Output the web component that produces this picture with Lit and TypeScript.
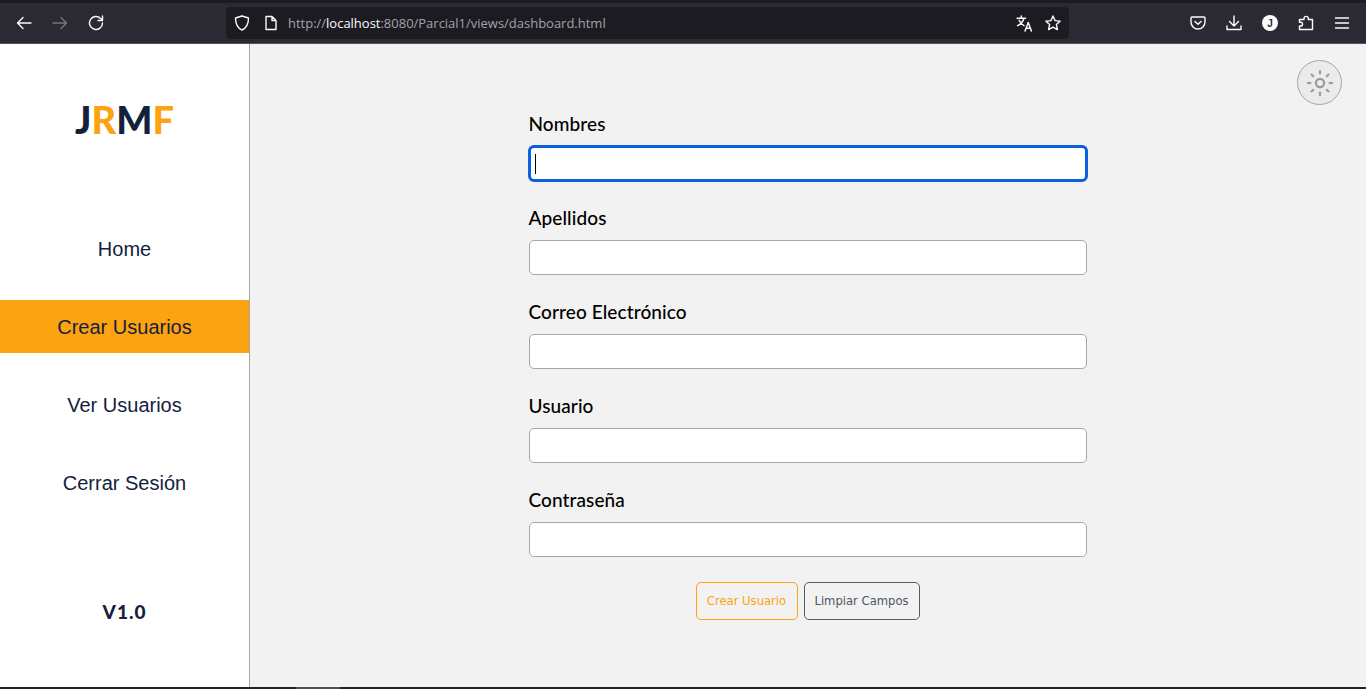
import { LitElement, html, css, svg } from 'lit';
import { customElement } from 'lit/decorators.js';

const icon = (body: unknown, size = 16) => html`<svg class="ic" width=${size} height=${size} viewBox="0 0 16 16" fill="none" stroke="currentColor" stroke-width="1.4" stroke-linecap="round" stroke-linejoin="round">${body}</svg>`;

@customElement('app-root')
export class AppRoot extends LitElement {
  static styles = css`
    :host {
      display: flex;
      flex-direction: column;
      height: 689px;
      overflow: hidden;
      background: #1c1b22;
      font-family: 'Liberation Sans', Arial, sans-serif;
    }

    .strip { height: 3px; background: #1c1b22; }
    .toolbar {
      height: 41px;
      box-sizing: border-box;
      background: #2b2a33;
      border-bottom: 1px solid #55545c;
      display: flex;
      align-items: center;
      color: #fbfbfe;
    }
    .ic { display: block; flex: none; }
    .nav { display: flex; align-items: center; gap: 20px; margin-left: 16px; width: 210px; }
    .dim { color: #77767c; }
    .url {
      width: 843px;
      height: 32px;
      border-radius: 4px;
      background: #1c1b22;
      display: flex;
      align-items: center;
      padding: 0 8px;
      box-sizing: border-box;
      font-family: 'Open Sans', 'Noto Sans', sans-serif;
      font-size: 13px;
      color: #a3a2a8;
    }
    .url .ic { color: #fbfbfe; }
    .url .shield { margin-right: 13px; }
    .url .addr { margin-left: 9px; flex: 1; letter-spacing: -0.01px; }
    .url b { font-weight: 400; color: #fbfbfe; }
    .url .tr { margin-right: 12px; margin-left: -1px; }
    .tools { display: flex; align-items: center; gap: 20px; margin-left: 121px; }
    .avatar {
      width: 16px;
      height: 16px;
      border-radius: 50%;
      background: #fbfbfe;
      color: #2b2a33;
      font-size: 10px;
      font-weight: 700;
      display: flex;
      align-items: center;
      justify-content: center;
    }

    .body { flex: none; height: 643px; display: flex; background: #f2f2f2; }
    .side {
      width: 250px;
      box-sizing: border-box;
      background: #fff;
      border-right: 1px solid #a6a6a6;
      display: flex;
      flex-direction: column;
      align-items: stretch;
    }
    .logo {
      margin-top: 47px;
      height: 56px;
      text-align: center;
      font-family: Lato, sans-serif;
      font-weight: 900;
      font-size: 38px;
      line-height: 56px;
      color: #14213d;
    }
    .logo span { color: #fca311; }
    .menu { margin-top: 75px; display: flex; flex-direction: column; gap: 25px; }
    .menu a {
      height: 53px;
      box-sizing: border-box;
      padding-top: 2px;
      display: flex;
      align-items: center;
      justify-content: center;
      font-size: 20px;
      color: #14213d;
    }
    .menu a.active { background: #fca311; }
    .version {
      margin-top: 91px;
      text-align: center;
      font-family: Lato, sans-serif;
      font-weight: 900;
      font-size: 19px;
      letter-spacing: 1px;
      color: #14213d;
    }

    .main { flex: 1; position: relative; display: flex; justify-content: center; }
    .theme {
      position: absolute;
      top: 16px;
      right: 24px;
      width: 45px;
      height: 45px;
      box-sizing: border-box;
      border-radius: 50%;
      border: 1px solid #a6a6a6;
      background: #ebebeb;
      color: #999;
      display: flex;
      align-items: center;
      justify-content: center;
    }
    form { width: 558px; margin-left: -1px; padding-top: 68px; display: flex; flex-direction: column; }
    label {
      display: block;
      font-family: Lato, sans-serif;
      font-weight: 500;
      font-size: 19px;
      letter-spacing: 0.1px;
      line-height: 24px;
      color: #000;
      margin-bottom: 10px;
    }
    .field { height: 94px; }
    .input {
      height: 35px;
      box-sizing: border-box;
      background: #fff;
      border: 1px solid #a6a6a6;
      border-radius: 5px;
      display: flex;
      align-items: center;
      padding-left: 5px;
    }
    .input.focus { border-color: #0b5fe0; outline: 3px solid #0b5fe0; outline-offset: -2px; }
    .caret { width: 1px; height: 20px; background: #000; }
    .actions { display: flex; justify-content: center; gap: 6px; }
    button {
      height: 38px;
      box-sizing: border-box;
      background: transparent;
      border-radius: 5px;
      padding: 0 10px;
      font-family: 'DejaVu Sans', sans-serif;
      font-size: 11.6px;
    }
    .primary { border: 1px solid #fca311; color: #fca311; width: 102px; padding: 0; }
    .secondary { border: 1px solid #5c5c5c; color: #4b5563; width: 116px; padding: 0; }
    .bottom { flex: 1; background: #1c2530; padding-left: 296px; }
    .tab { width: 44px; height: 100%; background: #4a5258; }
  `;

  render() {
    const fields = ['Nombres', 'Apellidos', 'Correo Electrónico', 'Usuario', 'Contraseña'];
    const rays = [0, 45, 90, 135, 180, 225, 270, 315].map(
      (a) => svg`<line x1="12" y1="1" x2="12" y2="4.500" transform="rotate(${a} 12 12)"/>`
    );
    return html`
      <div class="strip"></div>
      <div class="toolbar">
        <div class="nav">
          ${icon(svg`<path d="M15 8H1.500M7 2.500L1.500 8 7 13.500"/>`)}
          <span class="dim">${icon(svg`<path d="M1 8h13.500M9 2.500L14.500 8 9 13.500"/>`)}</span>
          ${icon(svg`<path d="M14.500 8a6.500 6.500 0 1 1-1.900-4.600L14.500 5.500M14.500 1v4.500H10"/>`)}
        </div>
        <div class="url">
          <span class="shield">${icon(svg`<path d="M8 1l6.500 2c0 6-1.600 9.800-6.500 12-4.900-2.200-6.500-6-6.500-12z"/>`)}</span>
          ${icon(svg`<path d="M3 1.500h6l4 4v9H3zM9 1.500v4h4"/>`)}
          <span class="addr">http://<b>localhost</b>:8080/Parcial1/views/dashboard.html</span>
          <span class="tr">${icon(svg`<path d="M1 3h8M5 1v2M7.500 3c-.8 3-3 5.500-6 7M3 5c.8 2 2.300 3.800 4.500 5M8.500 15l3-8 3 8M9.600 12.500h3.800"/>`, 17)}</span>
          ${icon(svg`<path d="M8 1l2.100 4.600 5 .6-3.700 3.400 1 5L8 12.100l-4.400 2.500 1-5L.9 6.200l5-.6z"/>`)}
        </div>
        <div class="tools">
          ${icon(svg`<path d="M2 2h12a1 1 0 0 1 1 1v4a7 7 0 0 1-14 0V3a1 1 0 0 1 1-1zM5 6.500L8 9.300l3-2.800"/>`)}
          ${icon(svg`<path d="M8 1v10M3.500 6.500L8 11l4.500-4.500M1 11v3.500h14V11"/>`)}
          <span class="avatar">J</span>
          ${icon(svg`<path d="M6 3a2.200 2 0 0 1 4.300 0v1.500h4.200v10H1.500v-3.500h1.200a1.800 1.800 0 0 0 0-3.700H1.500V4.500H6z"/>`)}
          ${icon(svg`<path d="M1.500 3h13M1.500 8h13M1.500 13h13"/>`)}
        </div>
      </div>
      <div class="body">
        <aside class="side">
          <div class="logo">J<span>R</span>M<span>F</span></div>
          <nav class="menu">
            <a>Home</a>
            <a class="active">Crear Usuarios</a>
            <a>Ver Usuarios</a>
            <a>Cerrar Sesión</a>
          </nav>
          <div class="version">V1.0</div>
        </aside>
        <main class="main">
          <div class="theme">
            <svg width="28" height="28" viewBox="0 0 24 24" fill="none" stroke="currentColor" stroke-width="1.800">
              <circle cx="12" cy="12" r="3.500"/>
              ${rays}
            </svg>
          </div>
          <form>
            ${fields.map(
              (name, i) => html`
                <div class="field">
                  <label>${name}</label>
                  <div class="input ${i === 0 ? 'focus' : ''}">${i === 0 ? html`<span class="caret"></span>` : ''}</div>
                </div>
              `
            )}
            <div class="actions">
              <button type="button" class="primary">Crear Usuario</button>
              <button type="button" class="secondary">Limpiar Campos</button>
            </div>
          </form>
        </main>
      </div>
      <div class="bottom"><div class="tab"></div></div>
    `;
  }
}
